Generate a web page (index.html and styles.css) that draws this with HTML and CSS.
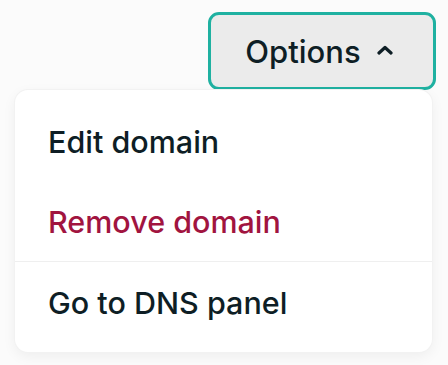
FILE: index.html
```html
<!DOCTYPE html>
<html lang="en">
<head>
    <meta charset="UTF-8">
    <title>Options</title>
    <link rel="stylesheet" href="styles.css">
</head>
<body>
    <div class="dropdown">
        <button class="toggle">
            <span>Options</span>
            <svg class="caret" width="16" height="10" viewBox="0 0 16 10"><path d="M2 8 L8 2.5 L14 8" fill="none" stroke="#0e1e25" stroke-width="3.2" stroke-linecap="round" stroke-linejoin="round"/></svg>
        </button>
        <ul class="menu">
            <li class="item">Edit domain</li>
            <li class="item danger">Remove domain</li>
            <li class="item divided">Go to DNS panel</li>
        </ul>
    </div>
</body>
</html>
```

FILE: styles.css
```css
body, html {
    margin: 0;
    padding: 0;
    height: 100%;
    background-color: #fbfbfb;
    font-family: Inter, "Noto Sans", sans-serif;
    color: #0e1e25;
}
.dropdown {
    display: flex;
    flex-direction: column;
    align-items: flex-end;
    padding-top: 12px;
}
.toggle {
    display: flex;
    align-items: center;
    justify-content: center;
    gap: 16px;
    width: 228px;
    height: 78px;
    margin-right: 12px;
    padding: 0 6px 0 0;
    box-sizing: border-box;
    background-color: #ebebeb;
    border: 3px solid #1fb1a1;
    border-radius: 11px;
    font-family: inherit;
    font-size: 31px;
    font-weight: 500;
    color: #0e1e25;
}
.caret {
    margin-top: -2px;
}
.menu {
    list-style: none;
    align-self: stretch;
    margin: 0 16px 0 15px;
    padding: 11px 0 10px;
    background-color: #fff;
    border-radius: 13px;
    box-shadow: 0 0 0 1px #f2f2f2, 0 4px 14px rgba(0, 0, 0, 0.06);
}
.item {
    height: 80px;
    display: flex;
    align-items: center;
    padding-left: 33px;
    font-size: 30.5px;
    font-weight: 500;
}
.danger {
    color: #a1143f;
}
.divided {
    border-top: 1px solid #efefef;
}
```
